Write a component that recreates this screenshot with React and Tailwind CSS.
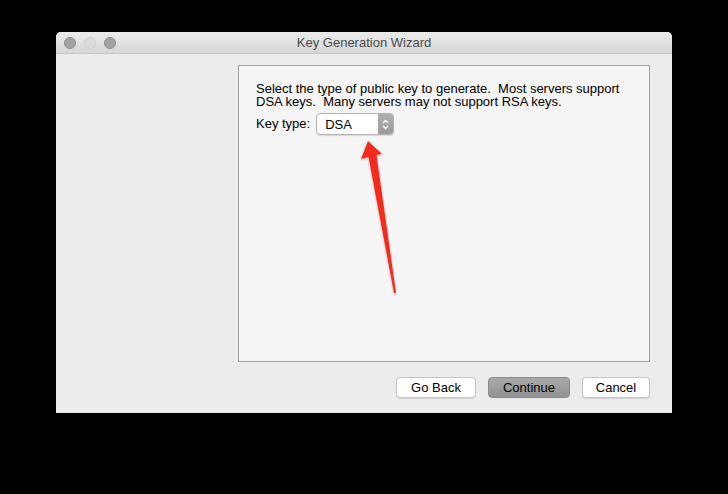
export default function App() {
  return (
    <div className="relative h-[494px] w-[728px] overflow-hidden bg-black pt-[32px] pl-[56px]" style={{ fontFamily: '"Liberation Sans", Arial, sans-serif' }}>
      <div className="flex h-[381px] w-[616px] flex-col overflow-hidden rounded-t-[5px] bg-[#ececec]">
        <div className="relative flex h-[22px] items-center border-b border-[#c8c8c8] bg-gradient-to-b from-[#ebebeb] to-[#d6d6d6]">
          <div className="flex items-center gap-[8px] pl-[8px]">
            <span className="h-[12px] w-[12px] rounded-full border border-[#8d8d8d] bg-[#a3a3a3]" />
            <span className="h-[12px] w-[12px] rounded-full border border-[#cfcfcf] bg-[#dcdcdc]" />
            <span className="h-[12px] w-[12px] rounded-full border border-[#8d8d8d] bg-[#a3a3a3]" />
          </div>
          <div className="absolute inset-0 flex items-center justify-center text-[13px] text-[#4a4a4a]">Key Generation Wizard</div>
        </div>
        <div className="flex flex-1 flex-col pl-[182px] pr-[22px] pt-[11px]">
          <div className="h-[297px] w-[412px] border border-[#a3a3a3] bg-[#f5f5f5] px-[17px] pt-[16px] text-[13px] text-black">
            <p className="leading-[13px]">
              Select the type of public key to generate.&nbsp; Most servers support
              <br />
              DSA keys.&nbsp; Many servers may not support RSA keys.
            </p>
            <div className="mt-[5px] flex items-center gap-[6px]">
              <span>Key type:</span>
              <div className="flex h-[22px] w-[78px] items-stretch overflow-hidden rounded-[4px] border border-[#b3b3b3] bg-white shadow-[0_1px_1px_rgba(0,0,0,0.12)]">
                <span className="flex flex-1 items-center pl-[8px] leading-none">DSA</span>
                <span className="flex w-[15px] items-center justify-center bg-gradient-to-b from-[#b0b0b0] to-[#9a9a9a]">
                  <svg width="7" height="11" viewBox="0 0 7 11" fill="none" stroke="#fff" strokeWidth="1.3">
                    <path d="M1 4 L3.5 1.5 L6 4" />
                    <path d="M1 7 L3.5 9.5 L6 7" />
                  </svg>
                </span>
              </div>
            </div>
          </div>
          <div className="mt-[15px] flex justify-end gap-[12px] text-[13px]">
            <button className="h-[21px] w-[80px] rounded-[4px] border border-[#c4c4c4] bg-white leading-none text-black shadow-[0_1px_1px_rgba(0,0,0,0.1)]">Go Back</button>
            <button className="h-[21px] w-[82px] rounded-[4px] border border-[#8a8a8a] bg-gradient-to-b from-[#a9a9a9] to-[#929292] leading-none text-black">Continue</button>
            <button className="h-[21px] w-[68px] rounded-[4px] border border-[#c4c4c4] bg-white leading-none text-black shadow-[0_1px_1px_rgba(0,0,0,0.1)]">Cancel</button>
          </div>
        </div>
      </div>
      <svg className="pointer-events-none absolute left-0 top-0" width="728" height="494">
        <defs>
          <filter id="sh" x="-50%" y="-50%" width="200%" height="200%">
            <feDropShadow dx="0" dy="1" stdDeviation="1.2" floodColor="#000" floodOpacity="0.3" />
          </filter>
        </defs>
        <polygon points="368,141 382,154 376.5,155 396,293 394,293 368.5,157 361,159" fill="#f42a1c" filter="url(#sh)" />
      </svg>
    </div>
  );
}
